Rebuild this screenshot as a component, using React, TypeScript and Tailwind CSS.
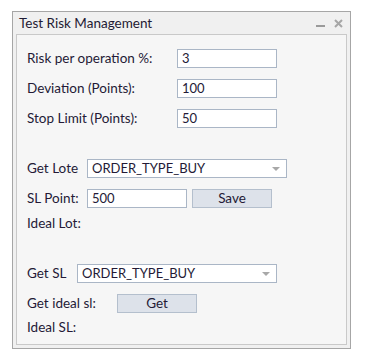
import React from 'react';

const font = { fontFamily: 'Lato, "Open Sans", sans-serif' };

const Field = ({ value, w }: { value: string; w: string }) => (
  <div
    className={`${w} h-[19px] bg-white border border-[#aab6c6] flex items-center px-[4px] text-[13px] text-[#241a36]`}
  >
    {value}
  </div>
);

const Select = ({ value }: { value: string }) => (
  <div className="w-[200px] h-[19px] bg-white border border-[#aab6c6] flex items-center justify-between pl-[4px] pr-[6px] text-[13px] text-[#241a36]">
    <span>{value}</span>
    <span className="w-0 h-0 border-l-[4px] border-r-[4px] border-t-[4px] border-l-transparent border-r-transparent border-t-[#a8a8a8]" />
  </div>
);

const Button = ({ label }: { label: string }) => (
  <div className="w-[80px] h-[19px] bg-[#dde2ea] border border-[#b4bfcd] flex items-center justify-center text-[13.5px] text-[#241a36]">
    {label}
  </div>
);

export default function App() {
  return (
    <div className="w-[376px] h-[360px] bg-white pt-[11px] pl-[12px]" style={font}>
      <div className="w-[339px] h-[338px] border border-[#a6a6a6] bg-[#f0f0f0] flex flex-col px-[3px] pb-[3px]">
        {/* title bar */}
        <div className="h-[22px] flex items-center justify-between pl-[3px] pr-[4px]">
          <span className="text-[13.5px] text-[#1f1a33]">Test Risk Management</span>
          <div className="flex items-center gap-[9px]">
            <span className="w-[9px] h-[2px] bg-[#9a9a9a] mt-[6px]" />
            <svg width="9" height="9" viewBox="0 0 9 9">
              <path d="M1 1 L8 8 M8 1 L1 8" stroke="#a6a6a6" strokeWidth="2" />
            </svg>
          </div>
        </div>

        {/* content panel */}
        <div className="flex-1 border border-[#c9c9c9] bg-[#f6f6f6] pl-[10px] pt-[14px] text-[13.5px] text-[#241a36]">
          <div className="flex items-center h-[19px]">
            <span className="w-[150px]">Risk per operation %:</span>
            <Field value="3" w="w-[100px]" />
          </div>
          <div className="flex items-center h-[19px] mt-[11px]">
            <span className="w-[150px]">Deviation (Points):</span>
            <Field value="100" w="w-[100px]" />
          </div>
          <div className="flex items-center h-[19px] mt-[11px]">
            <span className="w-[150px]">Stop Limit (Points):</span>
            <Field value="50" w="w-[100px]" />
          </div>

          <div className="flex items-center h-[19px] mt-[31px]">
            <span className="w-[60px]">Get Lote</span>
            <Select value="ORDER_TYPE_BUY" />
          </div>
          <div className="flex items-center h-[19px] mt-[11px]">
            <span className="w-[60px]">SL Point:</span>
            <Field value="500" w="w-[100px]" />
            <div className="ml-[5px]">
              <Button label="Save" />
            </div>
          </div>
          <div className="flex items-center h-[19px] mt-[6px]">
            <span>Ideal Lot:</span>
          </div>

          <div className="flex items-center h-[19px] mt-[31px]">
            <span className="w-[50px]">Get SL</span>
            <Select value="ORDER_TYPE_BUY" />
          </div>
          <div className="flex items-center h-[19px] mt-[11px]">
            <span className="w-[90px]">Get ideal sl:</span>
            <Button label="Get" />
          </div>
          <div className="flex items-center h-[19px] mt-[5px]">
            <span>Ideal SL:</span>
          </div>
        </div>
      </div>
    </div>
  );
}
